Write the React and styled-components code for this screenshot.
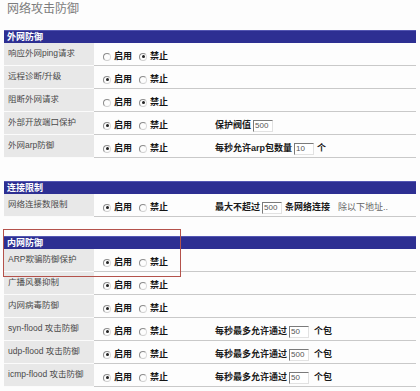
import styled, { createGlobalStyle } from "styled-components";

const GlobalStyle = createGlobalStyle`
  body {
    margin: 0;
    background: #fdfdfd;
    font-family: "Liberation Sans", "Noto Sans CJK SC", sans-serif;
  }
`;

const Page = styled.div`
  width: 420px;
  padding: 0 4px;
  box-sizing: border-box;
`;

const Title = styled.h1`
  margin: 0 0 12px;
  padding-left: 3px;
  font-size: 12px;
  line-height: 18px;
  font-weight: normal;
  color: #7c7c7c;
`;

const Section = styled.section`
  position: relative;
  margin-bottom: ${(p) => p.$gap || 0}px;
`;

const Header = styled.div`
  height: 13px;
  box-sizing: border-box;
  padding-left: 3px;
  background: #2d2f92;
  border-top: 1px solid #5356b2;
  color: #fff;
  font-size: 9px;
  font-weight: bold;
  line-height: 12px;
`;

const Row = styled.div`
  display: grid;
  grid-template-columns: 90px 1fr;
  height: 23px;
`;

const Label = styled.div`
  background: #e8e8e8;
  border-bottom: 1px solid #fbfbfb;
  padding: 4px 0 0 4px;
  font-size: 8.5px;
  line-height: 12px;
  color: #4a4a4a;
  white-space: nowrap;
`;

const Value = styled.div`
  display: flex;
  align-items: flex-start;
  border-bottom: 1px solid #c9c9c9;
  padding: 7px 0 0 9px;
  font-size: 9px;
  line-height: 13px;
`;

const RadioGroup = styled.div`
  display: flex;
  align-items: center;
  width: 112px;
  flex: none;
`;

const Radio = styled.span`
  width: 8px;
  height: 8px;
  box-sizing: border-box;
  border-radius: 50%;
  border: 1px solid #8c8c8c;
  border-right-color: #dadada;
  border-bottom-color: #cfcfcf;
  margin-right: 3px;
  display: flex;
  align-items: center;
  justify-content: center;

  &::after {
    content: "";
    width: 3px;
    height: 3px;
    border-radius: 50%;
    background: ${(p) => (p.$checked ? "#222" : "transparent")};
  }
`;

const Choice = styled.span`
  font-weight: bold;
  color: #151515;
  margin-right: 7px;
`;

const Extra = styled.div`
  display: flex;
  align-items: center;
  font-weight: bold;
  color: #1a1a1a;
  white-space: nowrap;
`;

const Box = styled.input`
  width: 20px;
  height: 12px;
  box-sizing: border-box;
  margin: 0 ${(p) => p.$after || 3}px 0 2px;
  padding: 0 1px;
  border: 1px solid;
  border-color: #7a7a7a #e2e2e2 #e2e2e2 #7a7a7a;
  background: #fff;
  font-family: "Liberation Sans", sans-serif;
  font-size: 8px;
  color: #555;
  outline: none;
`;

const Note = styled.span`
  margin-left: 8px;
  font-weight: normal;
  color: #666;
`;

const Mark = styled.div`
  position: absolute;
  top: -7px;
  left: -1px;
  width: 178px;
  height: 48px;
  box-sizing: border-box;
  border: 1px solid #b4524b;
  pointer-events: none;
`;

const sections = [
  {
    title: "外网防御",
    gap: 23,
    rows: [
      { label: "响应外网ping请求", on: false },
      { label: "远程诊断/升级", on: true },
      { label: "阻断外网请求", on: false },
      { label: "外部开放端口保护", on: true, extra: ["保护阀值", "500"] },
      { label: "外网arp防御", on: true, extra: ["每秒允许arp包数量", "10", "个"] },
    ],
  },
  {
    title: "连接限制",
    gap: 19,
    rows: [
      {
        label: "网络连接数限制",
        on: true,
        extra: ["最大不超过", "500", "条网络连接"],
        note: "除以下地址..",
      },
    ],
  },
  {
    title: "内网防御",
    mark: true,
    rows: [
      { label: "ARP欺骗防御保护", on: true },
      { label: "广播风暴抑制", on: true },
      { label: "内网病毒防御", on: true },
      { label: "syn-flood 攻击防御", on: true, extra: ["每秒最多允许通过", "50", "个包"] },
      { label: "udp-flood 攻击防御", on: true, extra: ["每秒最多允许通过", "500", "个包"] },
      { label: "icmp-flood 攻击防御", on: true, extra: ["每秒最多允许通过", "50", "个包"] },
    ],
  },
];

const Line = ({ label, on, extra, note }) => (
  <Row>
    <Label>{label}</Label>
    <Value>
      <RadioGroup>
        <Radio $checked={on} />
        <Choice>启用</Choice>
        <Radio $checked={!on} />
        <Choice>禁止</Choice>
      </RadioGroup>
      {extra && (
        <Extra>
          {extra[0]}
          <Box readOnly defaultValue={extra[1]} $after={extra[2] === "个包" ? 5 : 3} />
          {extra[2]}
          {note && <Note>{note}</Note>}
        </Extra>
      )}
    </Value>
  </Row>
);

const App = () => (
  <Page>
    <GlobalStyle />
    <Title>网络攻击防御</Title>
    {sections.map((s) => (
      <Section key={s.title} $gap={s.gap}>
        <Header>{s.title}</Header>
        {s.rows.map((r) => (
          <Line key={r.label} {...r} />
        ))}
        {s.mark && <Mark />}
      </Section>
    ))}
  </Page>
);

export default App;
